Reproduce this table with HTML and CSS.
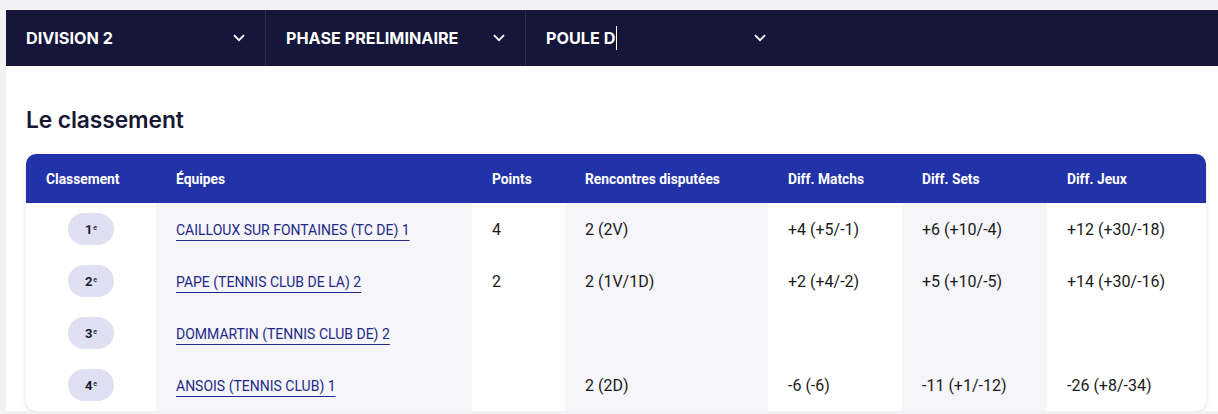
FILE: index.html
```html
<!DOCTYPE html>
<html lang="fr">
<head>
<meta charset="utf-8">
<title>Classement</title>
<link rel="stylesheet" href="styles.css">
</head>
<body>
<div class="page">
  <div class="topbar">
    <div class="select"><span class="select-label">DIVISION 2</span><svg class="chev" viewBox="0 0 12 8" width="12" height="8"><path d="M1 1.2 L6 6.2 L11 1.2" fill="none" stroke="#fff" stroke-width="1.8"/></svg></div>
    <div class="select"><span class="select-label">PHASE PRELIMINAIRE</span><svg class="chev" viewBox="0 0 12 8" width="12" height="8"><path d="M1 1.2 L6 6.2 L11 1.2" fill="none" stroke="#fff" stroke-width="1.8"/></svg></div>
    <div class="select select-last"><span class="select-label">POULE D<span class="caret"></span></span><svg class="chev" viewBox="0 0 12 8" width="12" height="8"><path d="M1 1.2 L6 6.2 L11 1.2" fill="none" stroke="#fff" stroke-width="1.8"/></svg></div>
  </div>
  <div class="content">
    <h2 class="title">Le classement</h2>
    <div class="card">
      <table class="ranking">
        <colgroup>
          <col class="c1"><col class="c2"><col class="c3"><col class="c4"><col class="c5"><col class="c6"><col class="c7">
        </colgroup>
        <thead>
          <tr>
            <th>Classement</th><th>Équipes</th><th>Points</th><th>Rencontres disputées</th><th>Diff. Matchs</th><th>Diff. Sets</th><th>Diff. Jeux</th>
          </tr>
        </thead>
        <tbody>
          <tr>
            <td class="rank"><span class="badge">1<sup>e</sup></span></td>
            <td class="shade"><a class="team" href="#">CAILLOUX SUR FONTAINES (TC DE) 1</a></td>
            <td>4</td>
            <td class="shade">2 (2V)</td>
            <td>+4 (+5/-1)</td>
            <td class="shade">+6 (+10/-4)</td>
            <td>+12 (+30/-18)</td>
          </tr>
          <tr>
            <td class="rank"><span class="badge">2<sup>e</sup></span></td>
            <td class="shade"><a class="team" href="#">PAPE (TENNIS CLUB DE LA) 2</a></td>
            <td>2</td>
            <td class="shade">2 (1V/1D)</td>
            <td>+2 (+4/-2)</td>
            <td class="shade">+5 (+10/-5)</td>
            <td>+14 (+30/-16)</td>
          </tr>
          <tr>
            <td class="rank"><span class="badge">3<sup>e</sup></span></td>
            <td class="shade"><a class="team" href="#">DOMMARTIN (TENNIS CLUB DE) 2</a></td>
            <td></td>
            <td class="shade"></td>
            <td></td>
            <td class="shade"></td>
            <td></td>
          </tr>
          <tr>
            <td class="rank"><span class="badge">4<sup>e</sup></span></td>
            <td class="shade"><a class="team" href="#">ANSOIS (TENNIS CLUB) 1</a></td>
            <td></td>
            <td class="shade">2 (2D)</td>
            <td>-6 (-6)</td>
            <td class="shade">-11 (+1/-12)</td>
            <td>-26 (+8/-34)</td>
          </tr>
        </tbody>
      </table>
    </div>
  </div>
</div>
</body>
</html>
```

FILE: styles.css
```css
* { box-sizing: border-box; }
html, body { margin: 0; padding: 0; }
body {
  background: #f2f2f4;
  font-family: Roboto, "Liberation Sans", sans-serif;
  color: #1a1a1a;
}
.page {
  padding: 10px 0 0 6px;
}
.topbar {
  height: 56px;
  background: #15163a;
  display: flex;
}
.select {
  width: 260px;
  border-right: 1px solid #2a2c4c;
  display: flex;
  align-items: center;
  justify-content: space-between;
  padding: 0 20px 0 20px;
}
.select-last { border-right: none; }
.select-label {
  color: #fff;
  font-family: Inter, Roboto, sans-serif;
  font-weight: 700;
  font-size: 16.2px;
  letter-spacing: 0;
  display: flex;
  align-items: center;
}
.caret {
  display: inline-block;
  width: 1px;
  height: 24px;
  background: #fff;
  margin-left: 1px;
}
.content {
  background: #fff;
  padding: 39px 12px 0 20px;
  height: 345px;
}
.title {
  margin: 0 0 19px;
  font-family: Inter, "Open Sans", sans-serif;
  font-weight: 600;
  font-size: 22.8px;
  line-height: 30px;
  color: #181835;
  letter-spacing: -0.1px;
}
.card {
  width: 1180px;
  border-radius: 10px;
  overflow: hidden;
  background: #fff;
  box-shadow: 0 1px 4px rgba(20, 20, 60, 0.14);
}
.ranking {
  width: 100%;
  border-collapse: collapse;
  table-layout: fixed;
}
.c1 { width: 130px; }
.c2 { width: 316px; }
.c3 { width: 93px; }
.c4 { width: 203px; }
.c5 { width: 134px; }
.c6 { width: 145px; }
.c7 { width: 159px; }
.ranking th {
  background: #2232a9;
  color: #fff;
  height: 49px;
  padding: 0 20px;
  text-align: left;
  font-size: 13.8px;
  font-weight: 700;
  white-space: nowrap;
}
.ranking td {
  height: 52px;
  padding: 0 20px;
  font-size: 16px;
  color: #1a1a1a;
  white-space: nowrap;
}
.ranking td.shade { background: #f5f5fa; }
.ranking td.rank {
  text-align: center;
  padding: 0;
}
.badge {
  display: inline-flex;
  align-items: center;
  justify-content: center;
  width: 46px;
  height: 32px;
  border-radius: 16px;
  background: #e0e0f3;
  font-size: 13px;
  font-weight: 700;
  color: #1a1a2e;
}
.badge sup {
  font-size: 7px;
  font-weight: 500;
  margin-left: 1px;
  position: relative;
  top: -1px;
}
.team {
  color: #1e2a86;
  font-size: 14px;
  text-decoration: underline;
  text-underline-offset: 5px;
  text-decoration-thickness: 1px;
}
```
